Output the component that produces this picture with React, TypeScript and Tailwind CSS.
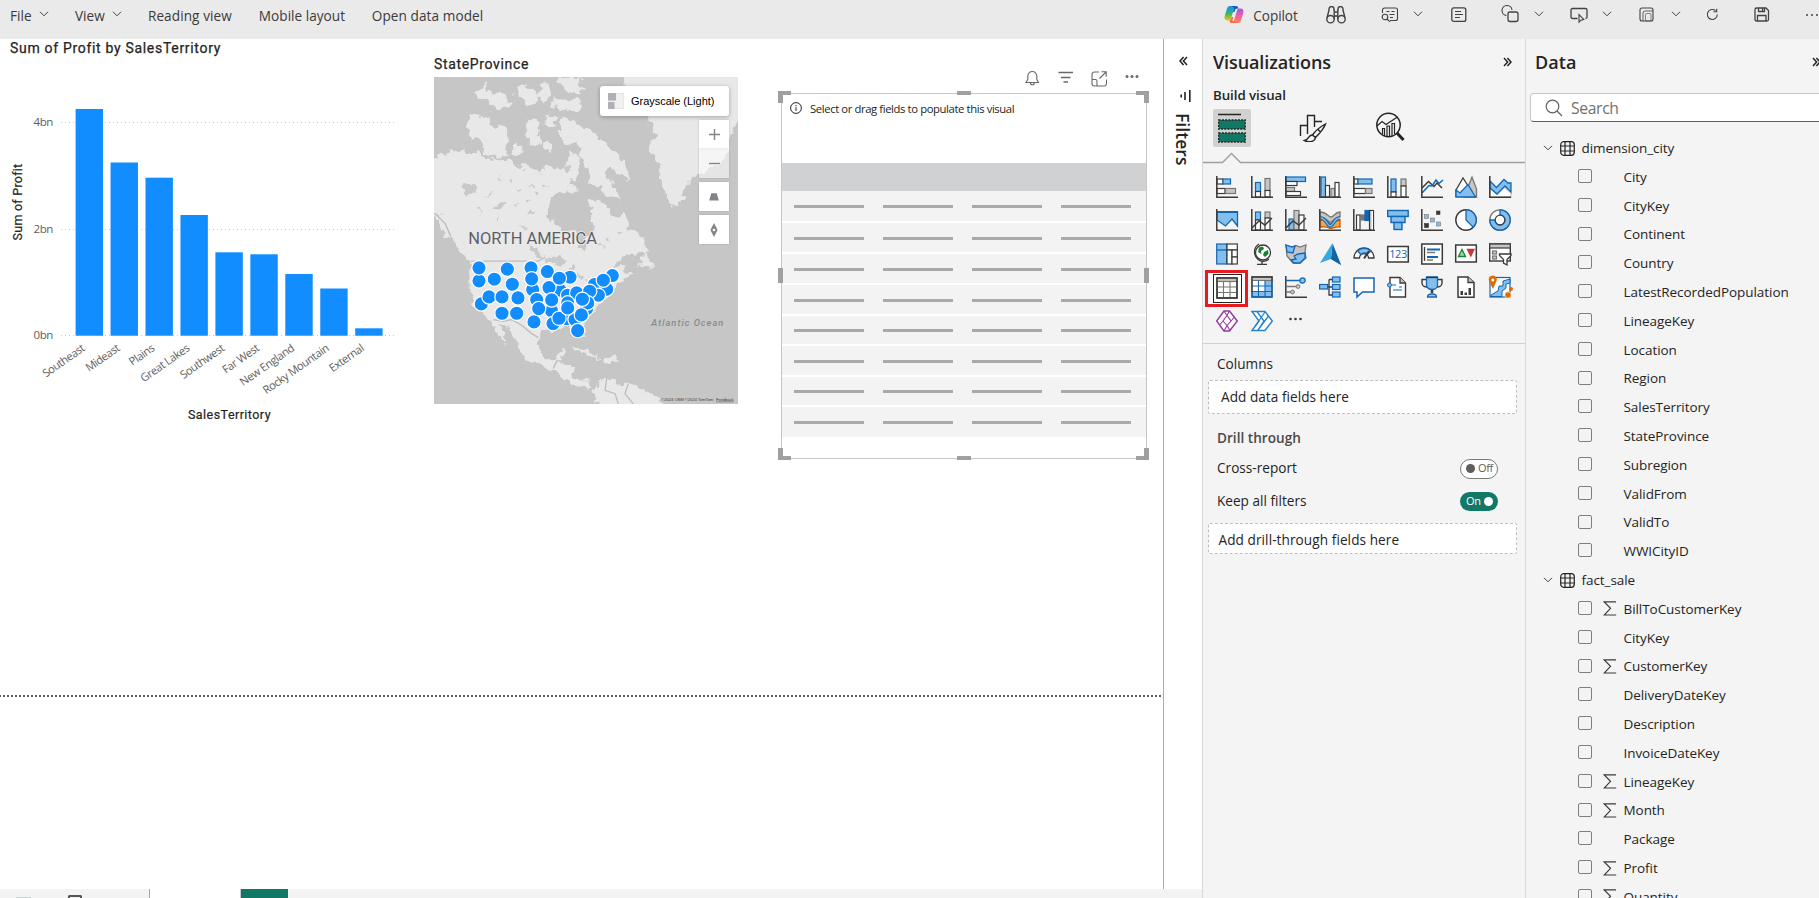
import React from "react";

const K = "#3b3a39";
const G = "#797775";
const LG = "#c8c6c4";
const B = "#1267b4";
const LB = "#83beec";
const W = "#ffffff";

/* ---------- small icon helpers ---------- */

function R({ x, y, w, h, f = W, s = K, sw = 1.2 }: { x: number; y: number; w: number; h: number; f?: string; s?: string; sw?: number }) {
  return <rect x={x} y={y} width={w} height={h} fill={f} stroke={s} strokeWidth={sw} />;
}
function P({ d, s = K, f = "none", sw = 1.3 }: { d: string; s?: string; f?: string; sw?: number }) {
  return <path d={d} stroke={s} fill={f} strokeWidth={sw} />;
}
function Axis() {
  return <path d="M.8 0V21.2H22" stroke={K} strokeWidth={1.5} fill="none" />;
}

function Chevron({ className = "" }: { className?: string }) {
  return (
    <svg width="10" height="6" viewBox="0 0 10 6" fill="none" stroke="#424242" className={className}>
      <path d="M1 .8 5 4.8 9 .8" />
    </svg>
  );
}

function DoubleChevron({ flip = false }: { flip?: boolean }) {
  return (
    <svg width="9" height="10" viewBox="0 0 9 10" fill="none" stroke="#252423" strokeWidth="1.5" className={flip ? "-scale-x-100" : ""}>
      <path d="M1 1 4.6 5 1 9M4.4 1 8 5 4.4 9" />
    </svg>
  );
}

/* ---------- top bar ---------- */

function TopBar() {
  const ico = { fill: "none", stroke: "#424242", strokeWidth: 1.1 };
  return (
    <header className="flex h-[39px] shrink-0 bg-[#eaeaea] pl-[10px] text-[13.6px] leading-[32px] tracking-[0.02px] text-[#3b3a39]">
      <div className="flex w-[65px] gap-[7px]">File<Chevron className="mt-[11px]" /></div>
      <div className="flex w-[73px] gap-[7px]">View<Chevron className="mt-[11px]" /></div>
      <div className="w-[111px] whitespace-nowrap tracking-[0.08px]">Reading view</div>
      <div className="w-[113px] whitespace-nowrap">Mobile layout</div>
      <div className="w-[853px] whitespace-nowrap tracking-[0.08px]">Open data model</div>
      <div className="w-[29px] pt-[5px]">
        <svg width="20" height="19" viewBox="0 0 20 19">
          <defs>
            <linearGradient id="cpA" x1="0" y1="0" x2="0" y2="1">
              <stop offset="0" stopColor="#1b8ef2" />
              <stop offset=".5" stopColor="#2fb573" />
              <stop offset="1" stopColor="#f5c400" />
            </linearGradient>
            <linearGradient id="cpB" x1="0" y1="0" x2="0" y2="1">
              <stop offset="0" stopColor="#9a5be8" />
              <stop offset=".5" stopColor="#ee5fa5" />
              <stop offset="1" stopColor="#ff8a4c" />
            </linearGradient>
          </defs>
          <path d="M6 1h7c-1.800-.2-2.500 1-3 2.600L7 13.500c-.5 1.500-1.300 2-2.600 2H3.500C1 15.500 0 13.500.7 11L3 3.500C3.500 1.800 4.500 1 6 1Z" fill="url(#cpA)" />
          <path d="M14 18H7c1.800.2 2.500-1 3-2.600L13 5.500c.5-1.500 1.300-2 2.600-2h.9c2.500 0 3.500 2 2.800 4.500L17 15.500c-.5 1.700-1.500 2.500-3 2.500Z" fill="url(#cpB)" />
          <path d="M6 1h6c1.600 0 2 .8 2.500 2.500h-1C12 3.500 11.300 4.200 11 5.300L10.300 7.500 9 6.500l1-3C9 1.500 8 1 6 1Z" fill="#1558c9" />
          <path d="M14 18H8c-1.600 0-2.200-1-2.700-2.600 1 0 1.500-.8 1.800-2l.6-1.900 1.600 1-1 3Z" fill="#fb6a4c" />
        </svg>
      </div>
      <div className="w-[73px] tracking-[-0.080px]">Copilot</div>
      <div className="w-[55px] pt-[6px]">
        <svg width="20" height="18" viewBox="0 0 20 18" {...ico} strokeWidth={1.4}>
          <circle cx="4.500" cy="13.200" r="3.700" />
          <circle cx="15.500" cy="13.200" r="3.700" />
          <path d="M1 12 3 4M19 12 17 4M8.200 13V3.500M11.800 13V3.500M8.200 6h3.600M8.200 10h3.600M3 4.500V3a2.400 2.400 0 0 1 5 0v2M17 4.500V3a2.400 2.400 0 0 0-5 0v2" />
        </svg>
      </div>
      <div className="w-[33px] pt-[7px]">
        <svg width="18" height="16" viewBox="0 0 18 16" {...ico}>
          <path d="M1.500 6V3a2 2 0 0 1 2-2h11a2 2 0 0 1 2 2v8.500a2 2 0 0 1-2 2H9M5.500 4.500h3M10.500 4.500h3M8.500 7.500h5M9 10.500h3" />
          <circle cx="4" cy="10" r="2.800" />
          <path d="m6 12 3 2.800" />
        </svg>
      </div>
      <div className="w-[37px] pt-[11px]"><Chevron className="-ml-px" /></div>
      <div className="w-[50px] pt-[7px]">
        <svg width="16" height="16" viewBox="0 0 16 16" {...ico}>
          <rect x=".8" y=".8" width="14" height="13.600" rx="2" strokeWidth="1.300" />
          <path d="M4 4.500h6M4 7.500h8M4 10.500h5" />
        </svg>
      </div>
      <div className="w-[34px] pt-[5px]">
        <svg width="19" height="18" viewBox="0 0 19 18" {...ico}>
          <rect x="7" y="7" width="10" height="9.500" rx="2" strokeWidth="1.300" />
          <path d="M5.500 10.500A5 5 0 1 1 11 5" />
        </svg>
      </div>
      <div className="w-[35px] pt-[11px]"><Chevron className="-ml-px" /></div>
      <div className="w-[33px] pt-[7px]">
        <svg width="19" height="17" viewBox="0 0 19 17" {...ico}>
          <path d="M7.500 11.500h-5a1.500 1.500 0 0 1-1.500-1.500V3a1.500 1.500 0 0 1 1.500-1.500h13A1.500 1.500 0 0 1 17 3v7c0 .8-.7 1.500-1.500 1.500" strokeWidth="1.300" />
          <path d="M9 7.500v7.700l2-2 2.800-.8z" fill="#eaeaea" />
        </svg>
      </div>
      <div className="w-[36px] pt-[11px]"><Chevron className="-ml-px" /></div>
      <div className="w-[33px] pt-[7px]">
        <svg width="16" height="16" viewBox="0 0 16 16" {...ico}>
          <rect x="1" y="1" width="13" height="13" rx="2" />
          <path d="M4 14V6a2 2 0 0 1 2-2h8" strokeWidth=".8" />
          <rect x="6.500" y="6.500" width="5.500" height="7.500" rx="1" strokeWidth=".6" />
        </svg>
      </div>
      <div className="w-[35px] pt-[11px]"><Chevron className="-ml-px" /></div>
      <div className="w-[48px] pt-[8px]">
        <svg width="13" height="13" viewBox="0 0 13 13" {...ico} className="-ml-px">
          <path d="M11.300 6.500a5 5 0 1 1-1.700-3.800M10.700.8v3H7.500" />
        </svg>
      </div>
      <div className="w-[51px] pt-[6px]">
        <svg width="16" height="17" viewBox="0 0 16 17" {...ico} strokeWidth={1.3} className="-ml-px">
          <path d="M1 3.500A1.500 1.500 0 0 1 2.500 2H12l2.500 2.500v9a1.500 1.500 0 0 1-1.500 1.500H2.500A1.500 1.500 0 0 1 1 13.500zM4.500 2v3.500h6V2M8.500 2v3M3.500 15V9.500h8.500V15" />
        </svg>
      </div>
      <div className="flex w-[13px] gap-[3px] overflow-hidden pt-[14px]">
        <i className="h-[2px] w-[2px] shrink-0 rounded-full bg-[#424242]" />
        <i className="h-[2px] w-[2px] shrink-0 rounded-full bg-[#424242]" />
        <i className="h-[2px] w-[2px] shrink-0 rounded-full bg-[#424242]" />
      </div>
    </header>
  );
}

/* ---------- column chart ---------- */

const bars: [string, number][] = [
  ["Southeast", 109],
  ["Mideast", 162.5],
  ["Plains", 177.7],
  ["Great Lakes", 215],
  ["Southwest", 252.3],
  ["Far West", 254.3],
  ["New England", 274],
  ["Rocky Mountain", 288.5],
  ["External", 328.3],
];

function ProfitChart() {
  return (
    <section className="w-[434px] shrink-0 font-['Roboto','Liberation_Sans',sans-serif]">
      <h3 className="h-[21px] pl-[10px] text-[14px] leading-[18px] tracking-[0.69px] whitespace-nowrap text-[#252423] [-webkit-text-stroke:0.25px_#252423]">
        Sum of Profit by SalesTerritory
      </h3>
      <svg width="434" height="370" viewBox="0 60 434 370">
        {[["4bn", 122.5], ["2bn", 229.5], ["0bn", 335.5]].map(([t, y]) => (
          <g key={t}>
            <line x1="61" x2="396" y1={y} y2={y} stroke="#c8c6c4" strokeDasharray="1 3" />
            <text x="53" y={Number(y) + 3.5} textAnchor="end" fontSize="11.500" fill="#605e5c" fontFamily="Open Sans, sans-serif" letterSpacing="-.4">{t}</text>
          </g>
        ))}
        {bars.map(([name, top], i) => (
          <g key={name}>
            <rect x={75.6 + i * 34.95} y={top} width="27.400" height={335.7 - top} fill="#118dff" />
            <text
              transform={`translate(${85.5 + i * 34.9} 350) rotate(-35)`}
              textAnchor="end"
              fontSize="11.200"
              letterSpacing="-.45"
              fill="#605e5c"
              fontFamily="Open Sans, sans-serif"
            >
              {name}
            </text>
          </g>
        ))}
        <g fill="#252423" stroke="#252423" strokeWidth=".2" fontSize="12.500" textAnchor="middle">
          <text transform="translate(22 202) rotate(-90)" letterSpacing=".25">Sum of Profit</text>
          <text x="229.500" y="419" letterSpacing=".45">SalesTerritory</text>
        </g>
      </svg>
    </section>
  );
}

/* ---------- map ---------- */

const cities: [number, number][] = [
  [162, 722], [162, 683], [208, 717], [247, 687], [262, 732], [318, 683], [323, 748], [320, 716],
  [367, 694], [435, 711], [405, 750], [372, 742], [403, 714], [169, 791], [192, 770], [231, 770], [279, 773],
  [231, 819], [275, 819], [335, 778], [327, 845], [380, 812], [341, 805], [428, 765], [380, 779],
  [384, 850], [425, 835], [402, 834], [455, 758], [508, 733], [562, 706], [545, 747], [535, 720],
  [520, 765], [494, 753], [485, 805], [488, 788], [472, 777], [428, 788], [450, 838], [428, 803], [469, 824], [458, 871],
];

const land = [
  "M27 352 60 345 105 328 130 340 165 335 180 352 225 362 262 365 278 385 300 372 335 386 372 378 405 386 428 368 438 338 456 332 466 352 456 382 462 400 442 425 426 448 398 460 380 472 364 500 363 530 385 550 420 568 444 574 456 600 466 622 480 628 478 600 498 585 510 562 500 545 506 520 490 500 495 478 520 484 552 496 562 530 585 532 597 515 606 545 625 568 645 585 662 615 658 638 620 640 590 652 572 672 560 690 592 672 604 680 592 694 632 698 610 712 588 722 575 728 552 765 530 790 505 815 482 842 472 855 480 892 465 895 448 860 425 854 402 864 385 876 362 870 343 888 338 905 345 935 360 955 378 964 398 955 406 934 424 932 416 952 404 966 438 970 444 984 440 1005 452 1020 485 1020 502 1032 492 1046 470 1040 440 1028 412 1006 385 988 345 974 300 955 284 935 284 915 262 888 245 862 232 850 222 850 232 875 248 905 242 912 222 882 205 850 188 834 160 812 142 785 134 750 133 690 137 662 112 640 96 606 80 588 60 556 46 524 0 512V352Z",
  "M135 222 165 228 190 222 200 250 222 258 245 262 252 290 240 330 262 345 232 352 200 348 170 330 165 292 140 300 132 275 128 250Z",
  "M308 240 335 232 345 262 338 285 350 320 322 318 304 300Z M362 228 390 232 384 262 362 258Z M352 300 376 300 380 338 358 338Z M268 310 292 325 286 345 262 340Z",
  "M408 240 440 236 460 258 490 262 515 280 530 300 560 325 585 350 610 385 608 420 585 410 560 385 540 400 560 430 580 460 582 480 550 470 520 440 492 430 500 400 475 370 465 330 450 305 420 320 408 285Z",
  "M150 155 190 126 182 150 215 158 240 170 262 195 235 205 215 208 190 180 160 172Z M282 135 310 140 345 165 330 192 310 195 290 172 270 160Z M390 178 470 180 475 208 430 212 388 200Z M350 125 370 130 378 160 360 195 345 172Z M400 115 470 112 455 130 480 150 440 160 410 145Z",
  "M586 90 970 90 939 245 912 300 912 340 880 370 830 400 796 418 775 460 756 508 738 495 720 455 708 415 702 375 680 330 678 300 695 288 672 250 665 210 625 175 600 140Z",
  "M648 655 662 632 670 650 688 682 660 680 642 678Z",
  "M435 928 470 920 500 938 528 955 500 950 465 934Z M535 955 555 948 585 960 545 964Z M500 1055 525 1025 545 1012 565 1025 612 1028 640 1045 668 1052 700 1075 735 1110 505 1110 520 1075Z",
  "M420 455 440 430 452 452 472 450 440 466Z M385 165 390 210 375 200Z M210 345 230 350 215 358Z M480 352 498 350 492 362Z",
  "M30 520 60 535 85 590 92 606 70 590 45 555Z",
];

const water =
  "M110 440 140 430 160 445 145 465 125 460Z M200 505 235 485 250 490 220 508Z M175 472 205 452 200 460Z M280 555 300 560 290 575Z M318 610 335 625 348 650 330 645Z M355 645 400 650 430 665 400 672 370 662Z M420 690 445 680 452 700 432 735 425 720Z M455 690 480 715 465 720Z M478 728 510 715 500 728Z M225 405 232 430 222 425Z M290 395 310 390 302 402Z M310 430 330 440 318 446Z M270 445 290 450 278 455Z M300 480 320 478 310 486Z M300 515 330 508 318 520Z M190 340 180 355Z M410 378 440 382 425 395Z M245 418 262 412 256 424Z M338 398 352 402 344 412Z M350 430 366 436 356 442Z M330 462 350 458 342 468Z M268 492 284 488 276 500Z M215 530 226 540 218 544Z M160 506 172 512 164 518Z M540 600 556 590 550 604Z M575 575 590 570 584 582Z M520 620 534 614 528 626Z";

function ProvinceMap() {
  return (
    <section className="w-[304px] shrink-0 pt-[15px]">
      <h3 className="h-[23px] font-['Roboto','Liberation_Sans',sans-serif] text-[14px] leading-[20px] tracking-[0.66px] text-[#252423] [-webkit-text-stroke:0.25px_#252423]">StateProvince</h3>
      <div className="relative h-[327px] w-[304px] overflow-hidden bg-[#c6c6c6]">
        <svg width="304" height="327" viewBox="27 111 912 980" preserveAspectRatio="none">
          <defs>
            <filter id="rough" filterUnits="userSpaceOnUse" x="0" y="80" width="970" height="1040">
              <feTurbulence type="fractalNoise" baseFrequency="0.045" numOctaves="2" seed="4" />
              <feDisplacementMap in="SourceGraphic" scale="36" xChannelSelector="R" yChannelSelector="G" />
            </filter>
          </defs>
          <g filter="url(#rough)">
            <rect x="-20" y="60" width="1010" height="1080" fill="#c6c6c6" />
            {land.map((d) => <path key={d} d={d} fill="#e8e8e8" />)}
            <path d={water} fill="#c9c9c9" />
          </g>
          <path d="M137 663H340L360 652M205 838 235 843 260 838 290 855 320 880 340 892M385 985 395 962 410 962M545 1015 540 1050 570 1060 580 1091M610 1030 600 1060 625 1091M30 520 60 550 78 590" fill="none" stroke="#bdbdbd" strokeWidth="4" />
          <text x="130" y="612" fontFamily="Roboto, sans-serif" fontSize="52" fill="#5f5d66" stroke="#ececec" strokeWidth="5" paintOrder="stroke" textLength="386" lengthAdjust="spacingAndGlyphs">NORTH AMERICA</text>
          <text x="679" y="857" fontFamily="Roboto, sans-serif" fontSize="28" fontStyle="italic" fontWeight="500" fill="#8a8a8a" textLength="216">Atlantic Ocean</text>
          {cities.map(([x, y], i) => (
            <circle key={i} cx={x} cy={y} r="21.500" fill="#118dff" stroke="#fff" strokeWidth="3.600" />
          ))}
          <text x="709" y="1081" fontFamily="Liberation Sans, sans-serif" fontSize="13" fill="#444" textLength="156">©2024 OSM ©2024 TomTom</text>
          <text x="873" y="1081" fontFamily="Liberation Sans, sans-serif" fontSize="13" fill="#444" textDecoration="underline" textLength="53">Feedback</text>
        </svg>
        <div className="absolute top-[9px] right-[9px] flex h-[30px] w-[129px] items-center rounded-[3px] bg-white pl-[8px] font-['Liberation_Sans',sans-serif] text-[11px] tracking-[-0.02px] whitespace-nowrap text-black shadow-[0_1px_4px_rgba(0,0,0,0.3)]">
          <svg width="16" height="16" viewBox="0 0 16 16" className="mr-[7px]">
            <rect width="16" height="16" rx="1.500" fill="#f0f0f0" stroke="#ddd" />
            <path d="M0 0H8V7.500H0ZM0 9H6.500V16H0Z" fill="#b0b0b6" />
          </svg>
          Grayscale (Light)
        </div>
        <div className="absolute top-[43px] right-[9px] flex w-[30px] flex-col text-[#818488]">
          <div className="flex h-[29px] items-center justify-center bg-white shadow-[0_0_2px_rgba(0,0,0,0.2)]">
            <svg width="11" height="11" viewBox="0 0 11 11" stroke="currentColor" strokeWidth="1.400"><path d="M5.500 0V11M0 5.500H11" /></svg>
          </div>
          <div className="mb-[4px] flex h-[29px] items-center justify-center bg-white/55 shadow-[0_0_2px_rgba(0,0,0,0.2)]">
            <svg width="11" height="3" viewBox="0 0 11 3" stroke="currentColor" strokeWidth="1.400"><path d="M0 1.500H11" /></svg>
          </div>
          <div className="mb-[4px] flex h-[29px] items-center justify-center bg-white shadow-[0_0_2px_rgba(0,0,0,0.2)]">
            <svg width="10" height="8" viewBox="0 0 10 8" fill="currentColor"><path d="M2.300.3h5.400L9.800 7.500H.2Z" /></svg>
          </div>
          <div className="flex h-[29px] items-center justify-center bg-white shadow-[0_0_2px_rgba(0,0,0,0.2)]">
            <svg width="8" height="14" viewBox="0 0 8 14" fill="currentColor"><path d="M4 0 7.600 7 4 14 .4 7Z" /><circle cx="4" cy="7" r="1.300" fill="#fff" /></svg>
          </div>
        </div>
      </div>
    </section>
  );
}

/* ---------- empty table visual ---------- */

const rowHeights = ["h-[32px]", "h-[31px]", "h-[31px]", "h-[31px]", "h-[30px]", "h-[31px]", "h-[30px]", "h-[32px]"];

function TableVisual() {
  const hd = "absolute bg-[#a0a0a0]";
  return (
    <section className="ml-[43px] flex w-[366px] shrink-0 flex-col">
      <div className="flex h-[54px] justify-end pt-[31px] pr-[8px]">
        <svg width="114" height="17" viewBox="0 0 114 17" fill="none" stroke="#6b6967" strokeWidth="1.100">
          <path d="M1 12.500h12.500L11.800 9.500V6a4.500 4.500 0 0 0-9 0v3.500ZM5.300 12.700a2 2 0 0 0 4 0" />
          <path d="M33.500 2.500H48M36 7.500H45.500M38.500 12H43" strokeWidth="1.400" />
          <path d="M74 2h-4.500A2.500 2.500 0 0 0 67 4.500v9a2.500 2.500 0 0 0 2.500 2.500h9.500a2.500 2.500 0 0 0 2.500-2.500V9.500M67 9.500h3.500A1.500 1.500 0 0 1 72 11v5M74.500 8.500 81 2M76.500 1.800h4.700v5" />
          <g fill="#6b6967" stroke="none"><circle cx="102" cy="6.500" r="1.500" /><circle cx="107" cy="6.500" r="1.500" /><circle cx="112" cy="6.500" r="1.500" /></g>
        </svg>
      </div>
      <div className="relative flex h-[366px] flex-col border border-[#c8c6c4] bg-white">
        <div className="flex h-[69px] gap-[8px] pt-[8px] pl-[8px] text-[11.300px] leading-[13px] tracking-[-0.400px] text-[#252423]">
          <svg width="12" height="12" viewBox="0 0 12 12" fill="none" stroke="#252423"><circle cx="6" cy="6" r="5.400" /><path d="M6 5.200V9M6 3v1.200" /></svg>
          Select or drag fields to populate this visual
        </div>
        <div className="h-[28px] bg-[#d0d1d3]" />
        {rowHeights.map((h, i) => (
          <div key={i} className={`${h} flex items-center gap-[19px] border-b-2 border-white bg-[#f3f3f3] pt-px pl-[12px]`}>
            {[0, 1, 2, 3].map((c) => <i key={c} className="h-[3px] w-[70px] bg-[#a9a9a9]" />)}
          </div>
        ))}
        <i className={`${hd} -top-[3px] -left-[4px] h-[4px] w-[13px]`} />
        <i className={`${hd} -top-[3px] -left-[4px] h-[12px] w-[5px]`} />
        <i className={`${hd} -top-[3px] -right-[3px] h-[4px] w-[13px]`} />
        <i className={`${hd} -top-[3px] -right-[3px] h-[12px] w-[5px]`} />
        <i className={`${hd} -bottom-[2px] -left-[4px] h-[4px] w-[13px]`} />
        <i className={`${hd} -bottom-[2px] -left-[4px] h-[12px] w-[5px]`} />
        <i className={`${hd} -right-[3px] -bottom-[2px] h-[4px] w-[13px]`} />
        <i className={`${hd} -right-[3px] -bottom-[2px] h-[12px] w-[5px]`} />
        <i className={`${hd} -top-[3px] left-[175px] h-[4px] w-[14px]`} />
        <i className={`${hd} -bottom-[2px] left-[175px] h-[4px] w-[14px]`} />
        <i className={`${hd} top-[174px] -left-[4px] h-[15px] w-[5px]`} />
        <i className={`${hd} top-[174px] -right-[3px] h-[15px] w-[5px]`} />
      </div>
    </section>
  );
}

/* ---------- filters ---------- */

function FiltersPane() {
  return (
    <aside className="flex w-[39px] shrink-0 flex-col items-center border-l border-[#adadad] bg-white pt-[17px]">
      <DoubleChevron flip />
      <svg width="11" height="14" viewBox="0 0 11 14" stroke="#252423" fill="none" strokeWidth="1.600" className="mt-[23px] ml-[4px]">
        <path d="M1.200 5.500V8.500M5 3V11M9.800 1V13" />
      </svg>
      <div className="mt-[10px] text-[17.500px] leading-[22px] font-semibold tracking-[0.050px] text-[#252423] [writing-mode:vertical-rl]">Filters</div>
    </aside>
  );
}

/* ---------- visual gallery ---------- */

const gallery: React.ReactNode[] = [
  <><R x={1} y={3} w={6} h={5} /><R x={7} y={3} w={7.5} h={5} f={LB} s={B} /><R x={1} y={12.5} w={8} h={5} /><R x={9.5} y={12.5} w={10} h={5} f={LG} s={G} /><Axis /></>,
  <><R x={4.5} y={6.5} w={5} h={9} f={LB} s={B} /><R x={4.5} y={15.5} w={5} h={5.5} /><R x={14} y={2.5} w={5} h={12} f={LG} s={G} /><R x={14} y={14.5} w={5} h={6.5} /><Axis /></>,
  <><R x={1} y={1} w={19.5} h={4.5} f={LB} s={B} /><R x={1} y={5.5} w={11} h={4} /><R x={1} y={11.5} w={8.5} h={4} f={LG} s={G} /><R x={1} y={15.5} w={14.5} h={4} /><Axis /></>,
  <><R x={2} y={1} w={4.5} h={20} f={LB} s={B} /><R x={6.5} y={9.5} w={4} h={11.5} /><R x={12} y={12.5} w={4} h={8.5} f={LG} s={G} /><R x={16} y={6.5} w={4} h={14.5} /><Axis /></>,
  <><R x={1} y={3} w={4} h={5} /><R x={5} y={3} w={14} h={5} f={LB} s={B} /><R x={1} y={12.5} w={11.5} h={5} /><R x={12.5} y={12.5} w={6.5} h={5} f={LG} s={G} /><Axis /></>,
  <><R x={4} y={3} w={5} h={13} f={LB} s={B} /><R x={4} y={16} w={5} h={5} /><R x={14} y={3} w={5} h={7} f={LG} s={G} /><R x={14} y={10} w={5} h={11} /><Axis /></>,
  <><P d="M1 12 7.500 5.500 13 10.500 16 7 21 12" s={K} sw={1.5} /><P d="M1 17 8 9.500 11 10 15 4 18 7.500 22 4" s={B} sw={1.5} /><Axis /></>,
  <><P d="M9 21 17 1 21.500 13V21Z" f={LG} s={G} /><P d="M1 14 8 2 15 13 M1 14V21" f={W} /><P d="M1 21V14L5 17 13 8.500 20.500 21Z" f={LB} s={B} /></>,
  <><P d="M1 21 1 12 8 18 15 11 22 17 22 21Z" f={W} s={LG} /><P d="M1 5 7.500 11.500 15 3.500 19 7H22V16L16 10 8 18 1 12Z" f={LB} s={B} /><Axis /></>,

  <><P d="M1 3H21.500V17L16 10 9.500 17 1 11Z" f={LB} s={B} /><P d="M1 3H22" s={B} sw={2} /><Axis /></>,
  <><R x={4.5} y={3} w={5} h={8} f={LB} s={B} /><R x={4.5} y={11} w={5} h={10} /><R x={14} y={3} w={5} h={6} f={LG} s={G} /><R x={14} y={9} w={5} h={12} /><P d="M1 19 8 12 14 16 21 9" sw={1.4} /><Axis /></>,
  <><R x={4} y={10} w={5} h={11} f={LB} s={B} /><R x={9} y={1.5} w={5} h={19.5} f={LG} s={G} /><R x={14} y={6} w={5} h={15} /><P d="M1 19 8 12 14 16 21 9" sw={1.4} /><Axis /></>,
  <><P d="M1 11H5C9 11 10 15 12 15S15 12 21 11V18C15 17 13 21 10 19S5 18 1 18Z" f="#f5a04d" s="#c45b00" /><P d="M1 3C8 3 9 8 12 8S16 3 21 3V8C15 8 14 14 11 13S6 8 1 8Z" f={LG} s={G} /><P d="M1 9C8 9 8 17 11 17S15 9 21 9" s={B} sw={3.5} /><P d="M1 9C8 9 8 17 11 17S15 9 21 9" s={LB} sw={1.3} /><Axis /></>,
  <><R x={3.5} y={6} w={3.5} h={15} /><R x={7.5} y={6} w={4} h={5} f={G} s={G} /><R x={12} y={1.5} w={4} h={10} f={B} s={B} /><R x={16.5} y={1.5} w={4} h={19.5} f={LG} /><R x={18.5} y={2} w={1.5} h={19} f={W} s={W} sw={0} /><Axis /></>,
  <><R x={0.7} y={1.5} w={20.5} h={6} f={LB} s={B} sw={1.4} /><R x={4} y={7.5} w={14} h={6} f={LB} s={B} sw={1.4} /><R x={7} y={13.5} w={8} h={7} f={LB} s={B} sw={1.4} /></>,
  <><R x={3.5} y={5.5} w={4} h={4} f={LB} s={G} sw={0.6} /><R x={15.5} y={2} w={3.5} h={3.5} f={K} s={K} sw={0.6} /><R x={9.5} y={9} w={4} h={4} f={LB} s={G} sw={0.6} /><R x={15.5} y={13} w={4} h={4} f={LB} s={G} sw={0.6} /><R x={3.5} y={14.5} w={4} h={4} f={K} s={K} sw={0.6} /><Axis /></>,
  <><circle cx="11" cy="11" r="10.200" fill={W} stroke={K} strokeWidth="1.400" /><P d="M11 .8A10.200 10.200 0 0 1 18.200 18.200L11 11Z" f={LB} s={B} /></>,
  <><circle cx="11" cy="11" r="10.200" fill={W} stroke={G} strokeWidth="1.300" /><P d="M11 .8A10.200 10.200 0 1 1 .8 11H6A5 5 0 1 0 11 6Z" f={LB} s={B} /><circle cx="11" cy="11" r="4.800" fill={W} stroke={K} strokeWidth="1.200" /></>,

  <><R x={0.7} y={1} w={10} h={20} f={LB} s={B} /><P d="M1 7H10.500" s={B} /><R x={11} y={1} w={10.3} h={6} /><R x={11} y={7} w={5} h={14} /><R x={16} y={7} w={5.3} h={7} /><R x={16} y={14} w={5.3} h={7} f={W} /></>,
  <><circle cx="12" cy="9.500" r="7.500" fill={W} stroke={K} strokeWidth="1.300" /><path d="M8 4.500 12 3.500 13 6 10 8 10.500 11 7 9ZM13 9 17 7 17.500 11 14 14 12 12Z" fill="#1a7f37" /><P d="M8 1C2.500 4 2 12 7 16.500 10 19 15 19 18 16M11 18.500V21M6 21.300H16" /></>,
  <><P d="M1 2 7 4 11 2.500 15 4 21 2 20 9 21 15 15 20 8 20 2 13Z" f={LG} s={G} /><P d="M1 2 7 4 10 3 8 10 2 9Z M9 13 13 11 20 10 20 15 15 20 9 20 6 17 11 16Z" f={LB} s={B} /></>,
  <><path d="M13.500 0 22 22 12 16Z" fill="#1a6faf" /><path d="M13.500 0 1 20 12 16Z" fill="#38a9dc" /><path d="M12 16 22 22 15 5Z" fill="#1565a5" /></>,
  <><P d="M1 15A10 10 0 0 1 21 15H15.500A4.500 4.500 0 0 0 6.500 15Z" f={W} s={K} /><P d="M4.500 8A10 10 0 0 1 18 8L14.500 11A5 5 0 0 0 8 11.500Z" f={LB} s={B} /><P d="M11 15.500 16 8" sw={2} /></>,
  <><R x={0.7} y={3.5} w={20.6} h={15.5} sw={1.5} /><text x="11" y="15.300" textAnchor="middle" fontSize="11" fill={B} fontFamily="Open Sans, sans-serif" letterSpacing="-.5">123</text></>,
  <><R x={0.8} y={1} w={20.5} h={20} sw={1.5} /><P d="M3.500 4V18" sw={1.3} /><P d="M6 6.500H19M6 14H17" s={B} sw={2} /><P d="M6 9.500H14M6 17H12" s={G} /></>,
  <><R x={0.7} y={2} w={20.6} h={17} sw={1.5} /><P d="M3.500 13.500 7 6.500 10.500 13.500Z" s="#1a7f37" f="#9fd8a8" /><P d="M12.500 6.500H19L15.800 13Z" s="#d13438" f="#d13438" /></>,
  <><R x={0.7} y={1} w={20.6} h={17} sw={1.4} /><R x={0.7} y={1} w={20.6} h={4} f={LG} /><R x={3.5} y={8} w={4} h={3} f={LG} s={G} /><R x={3.5} y={13} w={4} h={3} f={LG} s={G} /><P d="M10.500 11H22V12.500L18 16.500V22L14.500 20V16.500L10.500 12.500Z" f={W} /></>,

  <><R x={1} y={1} w={20} h={20} sw={1.4} /><R x={1} y={1} w={20} h={3.5} f={LG} s={G} /><P d="M1 10H21M1 15.500H21M7.500 4.500V21M14 4.500V21" s={G} sw={1.1} /><P d="M1 1V21H21V1Z" sw={1.3} /></>,
  <><R x={1} y={1} w={20} h={20} f={LB} /><R x={1} y={1} w={20} h={3.5} f={LG} s={G} /><path d="M1.500 5H14V15H1.500Z" fill={W} /><P d="M1 10H21M1 15.500H21M7.500 4.500V21M14 4.500V21" s={B} sw={1.1} /><P d="M1 16V1H21V5" /><P d="M21 5V21H1V16" s={B} /></>,
  <><Axis /><P d="M1 4.500H15" s={B} sw={1.5} /><circle cx="17.500" cy="4.500" r="2.700" fill={LB} stroke={B} strokeWidth="1.200" /><P d="M1 10.500H12M1 16H6" s={G} sw={1.5} /><circle cx="13" cy="10.500" r="1.900" fill={LG} stroke={G} /><circle cx="7.500" cy="16" r="1.900" fill={LG} stroke={G} /></>,
  <><P d="M6 11H13M10 3.500V19H13M10 3.500H13" sw={1.3} /><R x={0.6} y={8.5} w={8} h={4.5} f={LB} s={B} /><R x={13.5} y={1} w={7.5} h={5} f={LB} s={B} /><R x={13.5} y={8.5} w={7.5} h={5} f={LB} s={B} /><R x={13.5} y={16} w={7.5} h={5} f={LB} s={B} /></>,
  <P d="M1 2H21V16H9.500L4 21V16H1Z" f={W} s={B} sw={1.5} />,
  <><P d="M3 8V1.500H13L18.500 7V21H3V11" f={W} sw={1.4} /><P d="M13 1.500V7H18.500" f={LG} /><circle cx="2.500" cy="9" r="2" fill={LB} stroke={B} /><P d="M5 9H9M6 14H15M12 11H15" s="#4ba3e3" sw={1.3} /></>,
  <><P d="M5.500 3.500H1V7C1 10 4 11 6 11M16.500 3.500H21V7C21 10 18 11 16 11" sw={1.4} /><P d="M5.500 1H16.500V9C16.500 15 5.500 15 5.500 9Z" f={LB} s={B} /><P d="M5.500 1.500H16.500" sw={1.4} /><P d="M11 14V17" sw={2.5} /><P d="M6.500 21C6.500 17 15.500 17 15.500 21Z" f={LG} s={B} /></>,
  <><P d="M3 1H13L19 6.500V21.200H3Z" f={W} sw={1.5} /><P d="M13 1V6.500H19" f={LG} /><path d="M5.500 15H8V19H5.500ZM9.500 16.500H12V19H9.500ZM13.500 12H16V19H13.500Z" fill={K} /></>,
  <><R x={1} y={1.5} w={20} h={19.5} f={W} s={B} /><path d="M2 19 9 15 10 10 14 10 14 5 21 3 21 7 17 8 17 12 13 15 13 20.500 2 20.500Z" fill={LB} stroke={B} /><path d="M4-.5A4 4 0 0 1 7.500 5L4 13 0 5A4 4 0 0 1 4-.5Z" fill="#e06c00" /><circle cx="3.800" cy="4" r="1.500" fill={W} /><circle cx="19" cy="19" r="3.200" fill="#e06c00" stroke={W} strokeWidth=".6" /><circle cx="22" cy="13" r="2" fill="#e06c00" /></>,

  <><P d="M8 1H13.500L21.300 11 13.500 21H8L.7 11Z" s="#93389b" f={W} sw={1.4} /><P d="M8 1 11 5.500 13.500 1M11 5.500 7 11 11 15.500 15 11ZM7 11 3.500 15M11 15.500 8 21M11 15.500 14 20.500M15 11 18.500 7" s="#93389b" sw={1.1} /></>,
  <><P d="M1 1.500H14L21.300 11 14 20.500H1L8 11Z" s="#2282cf" f={W} sw={1.4} /><P d="M6 1.500 13 11 6.500 20.500M17.500 6 7 20M14 2 4 16.500" s="#2282cf" sw={1.3} /></>,
  <g fill={K}><circle cx="5.500" cy="9" r="1.300" /><circle cx="10.500" cy="9" r="1.300" /><circle cx="15.500" cy="9" r="1.300" /></g>,
];

function Gallery() {
  return (
    <div className="grid h-[180px] grid-cols-[35px_34px_34px_34px_34px_34px_34px_34px_34px] grid-rows-[33px_34px_33px_34px_33px] border-b border-[#d2d0ce] pt-[12px] pl-[13px]">
      {gallery.map((icon, i) => {
        const svg = (
          <svg width="22" height="22" viewBox="0 0 22 22" className="overflow-visible">
            {icon}
          </svg>
        );
        return i === 27 ? (
          <div key={i} className="-mt-[6px] -ml-[11px] h-[37px] w-[43px] border-[3px] border-[#e41b1f] bg-white/70 pt-px pl-[5px]">
            <div className="h-[29px] w-[29px] border border-[#252423] bg-white pt-[2px] pl-[2px]">{svg}</div>
          </div>
        ) : (
          <div key={i} className="h-[22px] w-[22px]">{svg}</div>
        );
      })}
    </div>
  );
}

function VisualizationsPane() {
  return (
    <aside className="flex w-[323px] shrink-0 flex-col border-l border-[#d9d9d9] bg-[#f4f4f4] text-[#252423]">
      <div className="flex h-[46px] items-center justify-between pr-[13px] pl-[10px]">
        <h2 className="text-[18px] font-semibold tracking-[-0.100px]">Visualizations</h2>
        <DoubleChevron />
      </div>
      <div className="h-[24px] pl-[10px] text-[13.300px] leading-[21px] font-semibold tracking-[-0.050px]">Build visual</div>
      <div className="flex pl-[10px]">
        <div className="flex h-[38px] w-[38px] items-center justify-center rounded-[2px] bg-[#d1d1d1]">
          <svg width="28" height="30" viewBox="0 0 28 30">
            <path d="M0 1.500H23" stroke="#252423" strokeWidth="1.500" />
            <rect x=".7" y="7" width="26.500" height="9" fill="#117865" stroke="#252423" strokeWidth="1.400" strokeDasharray="2 1.200" />
            <rect x=".7" y="20" width="26.500" height="9" fill="#117865" stroke="#252423" strokeWidth="1.400" strokeDasharray="2 1.200" />
          </svg>
        </div>
        <svg width="28" height="28" viewBox="0 0 28 28" className="mt-[5px] ml-[48px]" fill="none" stroke="#252423" strokeWidth="1.400">
          <path d="M1.500 22V11.500H8M8.500 20V1.500H15.500V13M15.500 7.500H23M26.500 10C21 13 15.500 18 13.500 21L16.500 23.500C20 20 25 14.500 26.500 10ZM13.500 21C9.500 20.500 11 25 5.500 26.500 10.500 29 16 27.500 16.500 23.500M19 15.500 21.500 18" />
        </svg>
        <svg width="30" height="30" viewBox="0 0 30 30" className="mt-[3px] ml-[48px]" fill="none" stroke="#252423" strokeWidth="1.500">
          <circle cx="13.500" cy="13" r="11.700" />
          <path d="M2 14 7 9.500 11 12.500 22.500 5M7.500 22.500V16.500H9.500V24M12 24.500V14H14.500V24.500M17 24V11.500H19.500V22" strokeWidth="1.200" />
          <path d="m22 21 6.500 7" strokeWidth="3" />
        </svg>
      </div>
      <svg width="322" height="12" viewBox="0 0 322 12" fill="none" className="mt-[5px]">
        <path d="M0 10.500H19.500L28.500 1.500 37.500 10.500H322" stroke="#a19f9d" strokeWidth="1.400" />
      </svg>
      <Gallery />
      <div className="flex flex-col pr-[8px] pl-[5px] text-[13.600px] tracking-[0.010px]">
        <div className="h-[36px] pl-[9px] leading-[40px]">Columns</div>
        <div className="h-[34px] rounded-[2px] border border-dashed border-[#c0bebc] bg-white pl-[12px] leading-[32px] tracking-[0.040px]">Add data fields here</div>
        <div className="h-[38px] pl-[9px] leading-[48px] font-semibold text-[#4b4a48]">Drill through</div>
        <div className="flex h-[33px] items-center justify-between pr-[19px] pl-[9px]">
          Cross-report
          <span className="flex h-[20px] w-[38px] items-center gap-[3px] rounded-full border border-[#7a7a7a] bg-white pl-[5px] text-[11px] tracking-[-0.400px] text-[#605e5c]">
            <i className="h-[9px] w-[9px] rounded-full bg-[#605e5c]" />Off
          </span>
        </div>
        <div className="flex h-[33px] items-center justify-between pr-[19px] pl-[9px]">
          Keep all filters
          <span className="flex h-[19px] w-[38px] items-center gap-[3px] rounded-full bg-[#117865] pl-[6px] text-[11px] tracking-[-0.300px] text-white">
            On<i className="h-[9px] w-[9px] rounded-full bg-white" />
          </span>
        </div>
        <div className="mt-[5px] h-[31px] rounded-[2px] border border-dashed border-[#c0bebc] bg-white pl-[9.500px] leading-[32px] tracking-[0.080px]">Add drill-through fields here</div>
      </div>
    </aside>
  );
}

/* ---------- data pane ---------- */

type Field = { name: string; sum?: boolean };
const tables: { name: string; fields: Field[] }[] = [
  {
    name: "dimension_city",
    fields: ["City", "CityKey", "Continent", "Country", "LatestRecordedPopulation", "LineageKey", "Location", "Region", "SalesTerritory", "StateProvince", "Subregion", "ValidFrom", "ValidTo", "WWICityID"].map((name) => ({ name })),
  },
  {
    name: "fact_sale",
    fields: [
      { name: "BillToCustomerKey", sum: true },
      { name: "CityKey" },
      { name: "CustomerKey", sum: true },
      { name: "DeliveryDateKey" },
      { name: "Description" },
      { name: "InvoiceDateKey" },
      { name: "LineageKey", sum: true },
      { name: "Month", sum: true },
      { name: "Package" },
      { name: "Profit", sum: true },
      { name: "Quantity", sum: true },
    ],
  },
];

function DataPane() {
  return (
    <aside className="flex min-w-0 flex-1 flex-col overflow-hidden border-l border-[#d9d9d9] bg-[#f4f4f4] text-[#252423]">
      <div className="flex h-[46px] shrink-0 items-center justify-between pl-[9px]">
        <h2 className="text-[18px] font-semibold tracking-[0.050px]">Data</h2>
        <div className="w-[7px] overflow-hidden"><DoubleChevron /></div>
      </div>
      <div className="mt-[8px] ml-[4px] flex h-[29px] shrink-0 items-center rounded-l-[4px] border border-r-0 border-[#c8c8c8] border-b-[#616161] bg-white pl-[14px] text-[15.700px] tracking-[-0.350px] text-[#707070]">
        <svg width="18" height="18" viewBox="0 0 18 18" fill="none" stroke="#616161" strokeWidth="1.200" className="mr-[8px]">
          <circle cx="7.500" cy="7.500" r="6.300" /><path d="m12 12 5 5" />
        </svg>
        <span className="pt-[3px]">Search</span>
      </div>
      <div className="mt-[11.800px] text-[13.500px] tracking-[-0.060px]">
        {tables.map((t) => (
          <div key={t.name}>
            <div className="flex h-[28.800px] items-center pl-[17px]">
              <Chevron />
              <svg width="15" height="15" viewBox="0 0 15 15" fill="none" stroke="#252423" strokeWidth="1.200" className="mr-[6.500px] ml-[7px]">
                <rect x=".7" y=".7" width="13.600" height="13.600" rx="3" /><path d="M5 .7V14.300M10 .7V14.300M.7 5H14.300M.7 10H14.300" />
              </svg>
              {t.name}
            </div>
            {t.fields.map((f) => (
              <div key={f.name} className="flex h-[28.800px] items-center pl-[52px]">
                <i className="mr-[11px] h-[14px] w-[14px] -translate-y-px rounded-[2px] border border-[#7f7f7f]" />
                <span className="w-[20.500px]">
                  {f.sum && (
                    <svg width="14" height="15" viewBox="0 0 14 15" fill="none" stroke="#3b3a39" strokeWidth="1.200"><path d="M13 .8H1.200L7.500 7.300 1.200 14H13.200" /></svg>
                  )}
                </span>
                {f.name}
              </div>
            ))}
          </div>
        ))}
      </div>
    </aside>
  );
}

/* ---------- page ---------- */

export default function App() {
  return (
    <div className="flex h-[898px] w-[1819px] flex-col overflow-hidden bg-white font-['Open_Sans','Noto_Sans',sans-serif]">
      <TopBar />
      <div className="flex min-h-0 flex-1">
        <div className="flex w-[1202px] shrink-0 flex-col">
          <div className="flex min-h-0 flex-1">
            <main className="flex w-[1163px] shrink-0 flex-col">
              <div className="flex h-[656px]">
                <ProfitChart />
                <ProvinceMap />
                <TableVisual />
              </div>
              <div className="h-[2px] bg-[repeating-linear-gradient(90deg,#5a5a5a_0_1px,transparent_1px_3px,#5a5a5a_3px_4px)]" />
            </main>
            <FiltersPane />
          </div>
          <footer className="flex h-[9px] shrink-0 bg-[#f3f3f3]">
            <div className="flex w-[150px] items-end border-r border-[#a6a6a6] pl-[16px]">
              <i className="h-px w-[15px] bg-[#c5d5d2]" />
              <i className="ml-[37px] h-[3px] w-[14px] rounded-t-[2px] border-2 border-b-0 border-[#555]" />
            </div>
            <div className="w-[91px] border-r border-[#c8c8c8] bg-white" />
            <div className="w-[47px] bg-[#117865]" />
          </footer>
        </div>
        <VisualizationsPane />
        <DataPane />
      </div>
    </div>
  );
}
